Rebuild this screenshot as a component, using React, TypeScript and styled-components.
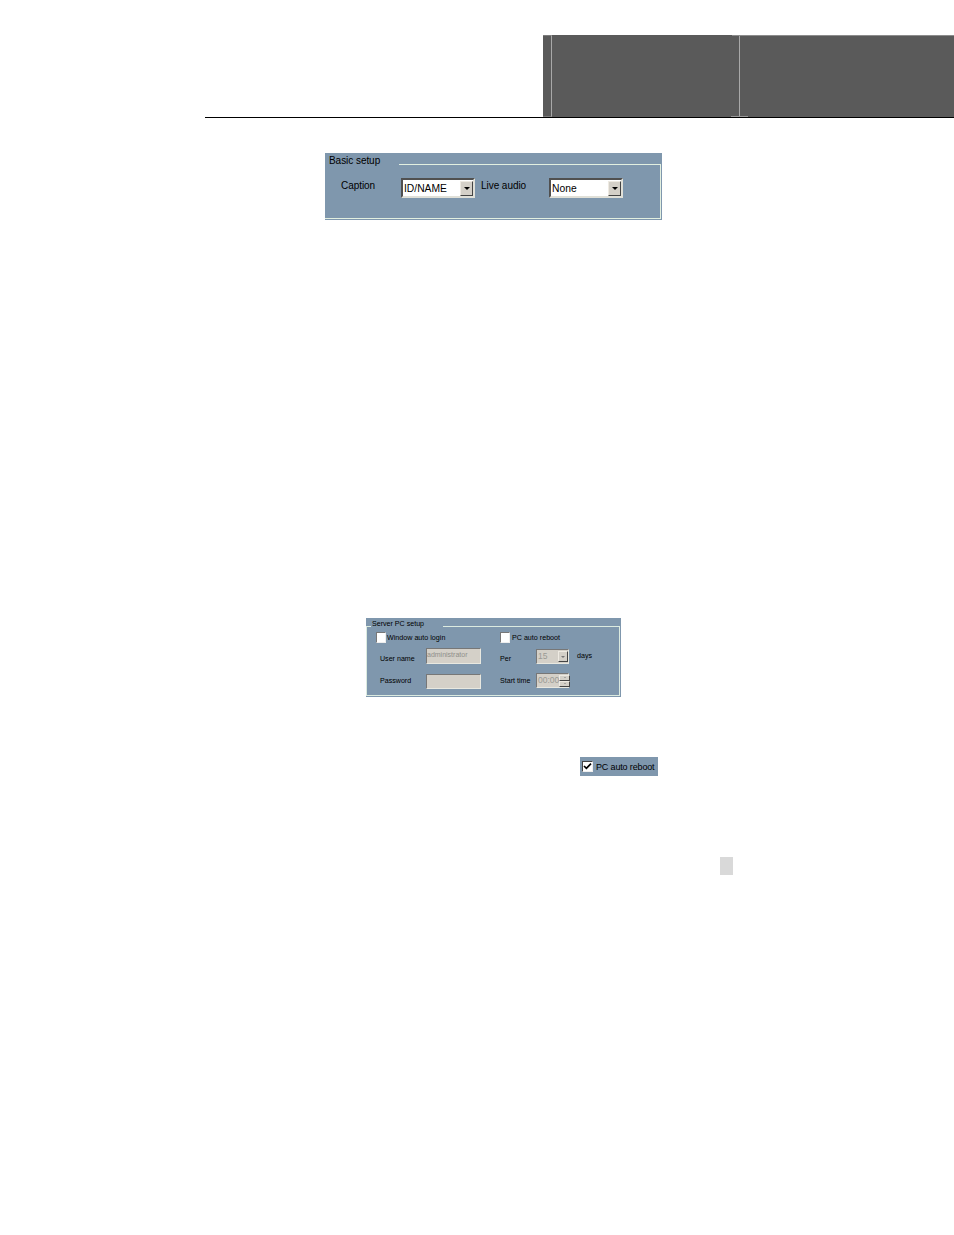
import React from "react";
import styled, { createGlobalStyle } from "styled-components";

const Global = createGlobalStyle`
  html, body { margin: 0; padding: 0; background: #fff; }
  body { font-family: "Liberation Sans", Arial, sans-serif; }
`;

const Page = styled.div`
  width: 954px;
  height: 1235px;
  overflow: hidden;
  display: flex;
  flex-direction: column;
  padding-top: 35px;
  box-sizing: border-box;
`;

const Header = styled.header`
  margin-left: 205px;
  height: 83px;
  box-sizing: border-box;
  border-bottom: 1px solid #000;
  display: flex;
  justify-content: flex-end;
`;

const HeaderBlock = styled.div`
  width: 411px;
  height: 82px;
  background: #5a5a5a;
  display: flex;
`;

const HeaderEdge = styled.div`
  width: 9px;
  box-sizing: border-box;
  border-top: 1px solid #7d7d7d;
  border-bottom: 1px solid #7d7d7d;
  border-right: 1px solid #a8a8a8;
`;

const HeaderMiddle = styled.div`
  width: 188px;
  box-sizing: border-box;
  border-right: 1px solid #a8a8a8;
  position: relative;

  &::before {
    content: "";
    position: absolute;
    top: 0;
    right: -1px;
    width: 8px;
    height: 1px;
    background: #8c8c8c;
  }

  &::after {
    content: "";
    position: absolute;
    bottom: 0;
    right: -9px;
    width: 17px;
    height: 1px;
    background: #9a9a9a;
  }
`;

const HeaderRest = styled.div`
  flex: 1;
  box-sizing: border-box;
  border-top: 1px solid #8c8c8c;
`;

const Panel = styled.section<{ $w: number; $h: number; $left: number; $top: number }>`
  width: ${(p) => p.$w}px;
  height: ${(p) => p.$h}px;
  margin-left: ${(p) => p.$left}px;
  margin-top: ${(p) => p.$top}px;
  background: #7f97ad;
  box-sizing: border-box;
  flex: none;
  color: #000;
`;

const BigPanel = styled(Panel)`
  padding: 11px 1px 0 0;
`;

const BigGroup = styled.div`
  position: relative;
  height: 55px;
  box-sizing: border-box;
  border: 1px solid #e2efe0;
  border-left: none;
  padding: 13px 0 0 16px;
`;

const BigLegend = styled.div`
  position: absolute;
  left: 0;
  top: -11px;
  width: 74px;
  height: 14px;
  padding-left: 4px;
  box-sizing: border-box;
  background: #7f97ad;
  font-size: 10px;
  line-height: 14px;
  letter-spacing: -0.05px;
`;

const BigRow = styled.div`
  display: flex;
  align-items: flex-start;
`;

const BigLabel = styled.span<{ $w: number; $indent?: number }>`
  width: ${(p) => p.$w}px;
  box-sizing: border-box;
  margin-top: 1px;
  padding-left: ${(p) => p.$indent ?? 0}px;
  font-size: 10px;
  line-height: 14px;
  letter-spacing: -0.05px;
  flex: none;
`;

const Combo = styled.div<{ $w: number; $h?: number; $disabled?: boolean; $mt?: number }>`
  width: ${(p) => p.$w}px;
  height: ${(p) => p.$h ?? 20}px;
  margin-top: ${(p) => p.$mt ?? 0}px;
  box-sizing: border-box;
  flex: none;
  display: flex;
  align-items: center;
  justify-content: space-between;
  background: ${(p) => (p.$disabled ? "#d4d0c8" : "#fff")};
  border: ${(p) => (p.$disabled ? 1 : 2)}px solid;
  border-color: ${(p) =>
    p.$disabled ? "#777 #e8e8e0 #e8e8e0 #777" : "#505050 #e0e0d8 #e0e0d8 #505050"};
`;

const ComboText = styled.span<{ $size: number; $color?: string; $dy?: number }>`
  font-size: ${(p) => p.$size}px;
  line-height: 1;
  color: ${(p) => p.$color ?? "#000"};
  padding-left: 1px;
  padding-top: ${(p) => p.$dy ?? 0}px;
  white-space: nowrap;
`;

const ArrowButton = styled.div<{ $w: number; $h: number }>`
  width: ${(p) => p.$w}px;
  height: ${(p) => p.$h}px;
  box-sizing: border-box;
  background: #d4d0c8;
  border: 1px solid;
  border-color: #eeeae2 #444 #444 #eeeae2;
  display: flex;
  align-items: center;
  justify-content: center;
  flex: none;
`;

const Arrow = styled.i<{ $size: number; $color?: string; $up?: boolean }>`
  display: block;
  width: 0;
  height: 0;
  border-left: ${(p) => p.$size}px solid transparent;
  border-right: ${(p) => p.$size}px solid transparent;
  border-top: ${(p) => (p.$up ? "0" : `${p.$size}px solid ${p.$color ?? "#000"}`)};
  border-bottom: ${(p) => (p.$up ? `${p.$size}px solid ${p.$color ?? "#000"}` : "0")};
`;

const SmallPanel = styled(Panel)`
  padding: 8px 1px 1px 0;
`;

const SmallGroup = styled.div`
  position: relative;
  height: 70px;
  box-sizing: border-box;
  border: 1px solid #dcebe0;
  padding: 5px 0 0 9px;
`;

const SmallLegend = styled.div`
  position: absolute;
  left: 4px;
  top: -9px;
  width: 72px;
  height: 13px;
  padding-left: 1px;
  box-sizing: border-box;
  background: #7f97ad;
  font-size: 7.1px;
  line-height: 13px;
  white-space: nowrap;
`;

const SmallGrid = styled.div`
  display: grid;
  grid-template-columns: 50px 74px 36px 41px 30px;
  grid-template-rows: 16px 25px 16px;
  align-items: start;
`;

const CheckCell = styled.div<{ $col: string; $gap: number }>`
  grid-column: ${(p) => p.$col};
  display: flex;
  align-items: flex-start;
  gap: ${(p) => p.$gap}px;
  font-size: 7.15px;
  line-height: 13px;
  white-space: nowrap;
`;

const Box = styled.span`
  width: 10px;
  height: 11px;
  box-sizing: border-box;
  background: #fff;
  border: 1px solid;
  border-color: #777 #eee #eee #777;
  flex: none;
`;

const SmallLabel = styled.span<{ $indent?: number; $mt: number }>`
  font-size: 7.1px;
  line-height: 10px;
  margin-top: ${(p) => p.$mt}px;
  padding-left: ${(p) => p.$indent ?? 0}px;
  white-space: nowrap;
`;

const Field = styled.div<{ $h: number; $mt?: number }>`
  width: 55px;
  height: ${(p) => p.$h}px;
  margin-top: ${(p) => p.$mt ?? 0}px;
  box-sizing: border-box;
  background: #d4d0c8;
  border: 1px solid;
  border-color: #777 #e8e8e0 #e8e8e0 #777;
  font-size: 7px;
  line-height: 12px;
  color: #8f8f8a;
  white-space: nowrap;
  overflow: hidden;
`;

const Spin = styled.div`
  display: flex;
  flex-direction: column;
  width: 11px;
  flex: none;
`;

const CheckPanel = styled(Panel)`
  display: flex;
  align-items: center;
  padding-left: 2px;
  gap: 3px;
`;

const BigBox = styled.span`
  width: 11px;
  height: 11px;
  box-sizing: border-box;
  background: #fff;
  border: 1px solid;
  border-color: #444 #eee #eee #444;
  flex: none;
  display: flex;
  align-items: center;
  justify-content: center;
`;

const CheckLabel = styled.span`
  font-size: 9px;
  letter-spacing: -0.15px;
  white-space: nowrap;
`;

const Marker = styled.div`
  width: 13px;
  height: 18px;
  margin-left: 720px;
  margin-top: 81px;
  background: #d9d9d9;
  flex: none;
`;

export default function App() {
  return (
    <Page>
      <Global />
      <Header>
        <HeaderBlock>
          <HeaderEdge />
          <HeaderMiddle />
          <HeaderRest />
        </HeaderBlock>
      </Header>

      <BigPanel $w={337} $h={67} $left={325} $top={35}>
        <BigGroup>
          <BigLegend>Basic setup</BigLegend>
          <BigRow>
            <BigLabel $w={60}>Caption</BigLabel>
            <Combo $w={74}>
              <ComboText $size={10.3} $dy={2}>ID/NAME</ComboText>
              <ArrowButton $w={13} $h={15}><Arrow $size={3} /></ArrowButton>
            </Combo>
            <BigLabel $w={74} $indent={6}>Live audio</BigLabel>
            <Combo $w={74}>
              <ComboText $size={10.3} $dy={2}>None</ComboText>
              <ArrowButton $w={13} $h={15}><Arrow $size={3} /></ArrowButton>
            </Combo>
          </BigRow>
        </BigGroup>
      </BigPanel>

      <SmallPanel $w={255} $h={79} $left={366} $top={398}>
        <SmallGroup>
          <SmallLegend>Server PC setup</SmallLegend>
          <SmallGrid>
            <CheckCell $col="1 / 3" $gap={1}><Box />Window auto login</CheckCell>
            <CheckCell $col="3 / 6" $gap={2}><Box />PC auto reboot</CheckCell>

            <SmallLabel $indent={4} $mt={6}>User name</SmallLabel>
            <Field $h={16}>administrator</Field>
            <SmallLabel $mt={6}>Per</SmallLabel>
            <Combo $w={33} $h={15} $mt={1} $disabled>
              <ComboText $size={8.5} $color="#9a9a94">15</ComboText>
              <ArrowButton $w={10} $h={11}><Arrow $size={2} $color="#777" /></ArrowButton>
            </Combo>
            <SmallLabel $mt={3}>days</SmallLabel>

            <SmallLabel $indent={4} $mt={3}>Password</SmallLabel>
            <Field $h={15} $mt={1} />
            <SmallLabel $mt={3}>Start time</SmallLabel>
            <Combo $w={33} $h={15} $disabled>
              <ComboText $size={8.5} $color="#9a9a94">00:00</ComboText>
              <Spin>
                <ArrowButton $w={11} $h={6}><Arrow $size={1} $color="#777" $up /></ArrowButton>
                <ArrowButton $w={11} $h={6}><Arrow $size={1} $color="#777" /></ArrowButton>
              </Spin>
            </Combo>
          </SmallGrid>
        </SmallGroup>
      </SmallPanel>

      <CheckPanel $w={78} $h={19} $left={580} $top={60}>
        <BigBox>
          <svg width="9" height="9" viewBox="0 0 9 9">
            <path d="M1 4l2.4 2.4L8 1.6" fill="none" stroke="#000" strokeWidth="1.7" />
          </svg>
        </BigBox>
        <CheckLabel>PC auto reboot</CheckLabel>
      </CheckPanel>

      <Marker />
    </Page>
  );
}
